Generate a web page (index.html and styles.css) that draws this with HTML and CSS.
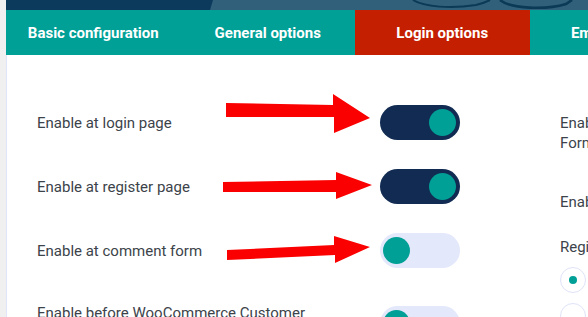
FILE: index.html
```html
<!DOCTYPE html>
<html>
<head>
<meta charset="utf-8">
<link rel="stylesheet" href="styles.css">
</head>
<body>
<div class="page">
  <div class="banner">
    <svg width="1100" height="10" viewBox="0 0 1100 10">
      <rect x="0" y="0" width="1100" height="10" fill="#0b3a5c"/>
      <polygon points="207,0 1100,0 1100,10 204,10" fill="#30607a"/>
      <path d="M407 0 C 418 7, 445 9, 470 5 C 478 3, 482 1, 484 0" fill="none" stroke="#0a3a56" stroke-width="2"/>
      <path d="M494 0 C 505 9, 540 10, 560 4 L 566 0" fill="none" stroke="#0a3a56" stroke-width="2.6"/>
    </svg>
  </div>
  <nav class="tabs">
    <a class="tab">Basic configuration</a>
    <a class="tab">General options</a>
    <a class="tab active">Login options</a>
    <a class="tab">Email options</a>
  </nav>
  <div class="panel">
    <div class="col left">
      <div class="row">
        <span class="label">Enable at login page</span>
        <span class="switch on"><span class="knob"></span></span>
      </div>
      <div class="row">
        <span class="label">Enable at register page</span>
        <span class="switch on"><span class="knob"></span></span>
      </div>
      <div class="row">
        <span class="label">Enable at comment form</span>
        <span class="switch off"><span class="knob"></span></span>
      </div>
      <div class="row tall">
        <span class="label">Enable before WooCommerce Customer Login Form</span>
        <span class="switch off"><span class="knob"></span></span>
      </div>
    </div>
    <div class="col right">
      <div class="rlabel two">Enable at WooCommerce Login Form</div>
      <div class="rlabel one">Enable at checkout</div>
      <div class="rlabel three">Registration form position</div>
      <div class="radio checked"><span class="dot"></span></div>
      <div class="radio"></div>
    </div>
    <svg class="arrows" width="400" height="300" viewBox="0 0 400 300">
      <g fill="#fa0000">
        <polygon points="226,48 333,50 333,39 370,63 334,78 334,62 226,62"/>
        <polygon points="223,127 336,125 336,117 372,130 336,144 336,137 223,137"/>
        <polygon points="227,195 334,190 334,181 370,192 335,208 335,200 227,205"/>
      </g>
    </svg>
  </div>
</div>
</body>
</html>
```

FILE: styles.css
```css
html, body {
  margin: 0;
  padding: 0;
}
body {
  background: #f0f0f1;
  overflow: hidden;
  font-family: Roboto, "Liberation Sans", Arial, sans-serif;
}
.page {
  margin-left: 6px;
  width: 1100px;
  background: #ffffff;
  min-height: 400px;
}
.banner {
  height: 10px;
  overflow: hidden;
}
.banner svg {
  display: block;
}
.tabs {
  display: flex;
  height: 45px;
  background: #00a096;
}
.tab {
  width: 174.5px;
  flex: 0 0 auto;
  display: flex;
  align-items: center;
  justify-content: center;
  color: #ffffff;
  font-weight: 700;
  font-size: 15px;
  box-sizing: border-box;
}
.tab.active {
  background: #c41f00;
}
.panel {
  position: relative;
  display: flex;
  border-left: 1px solid #e1e5f9;
  min-height: 360px;
}
.col.left {
  width: 553px;
  padding: 50px 0 0 30px;
  box-sizing: border-box;
  display: flex;
  flex-direction: column;
  gap: 29px;
}
.row {
  display: flex;
  align-items: center;
  min-height: 35px;
}
.row.tall {
  margin-top: 6px;
}
.label {
  width: 343px;
  font-size: 15px;
  line-height: 20px;
  color: #3c434a;
  padding-right: 60px;
  box-sizing: border-box;
}
.switch {
  position: relative;
  width: 80px;
  height: 35px;
  border-radius: 18px;
  flex: 0 0 auto;
}
.switch.on {
  background: #112b52;
}
.switch.off {
  background: #e3e8fb;
}
.knob {
  position: absolute;
  top: 4px;
  width: 27px;
  height: 27px;
  border-radius: 50%;
  background: #00a096;
}
.switch.on .knob {
  right: 4px;
}
.switch.off .knob {
  left: 3px;
}
.col.right {
  padding-top: 58px;
  display: flex;
  flex-direction: column;
}
.rlabel {
  width: 225px;
  font-size: 15px;
  line-height: 20px;
  color: #3c434a;
}
.rlabel.one {
  margin-top: 39px;
}
.rlabel.three {
  margin-top: 25px;
}
.radio {
  width: 24px;
  height: 24px;
  border: 1px solid #dfe3f7;
  border-radius: 50%;
  display: flex;
  align-items: center;
  justify-content: center;
  margin-top: 10px;
}
.radio + .radio {
  margin-top: 10px;
}
.dot {
  width: 8px;
  height: 8px;
  border-radius: 50%;
  background: #00a096;
}
.arrows {
  position: absolute;
  left: -7px;
  top: 0;
  pointer-events: none;
}
```
